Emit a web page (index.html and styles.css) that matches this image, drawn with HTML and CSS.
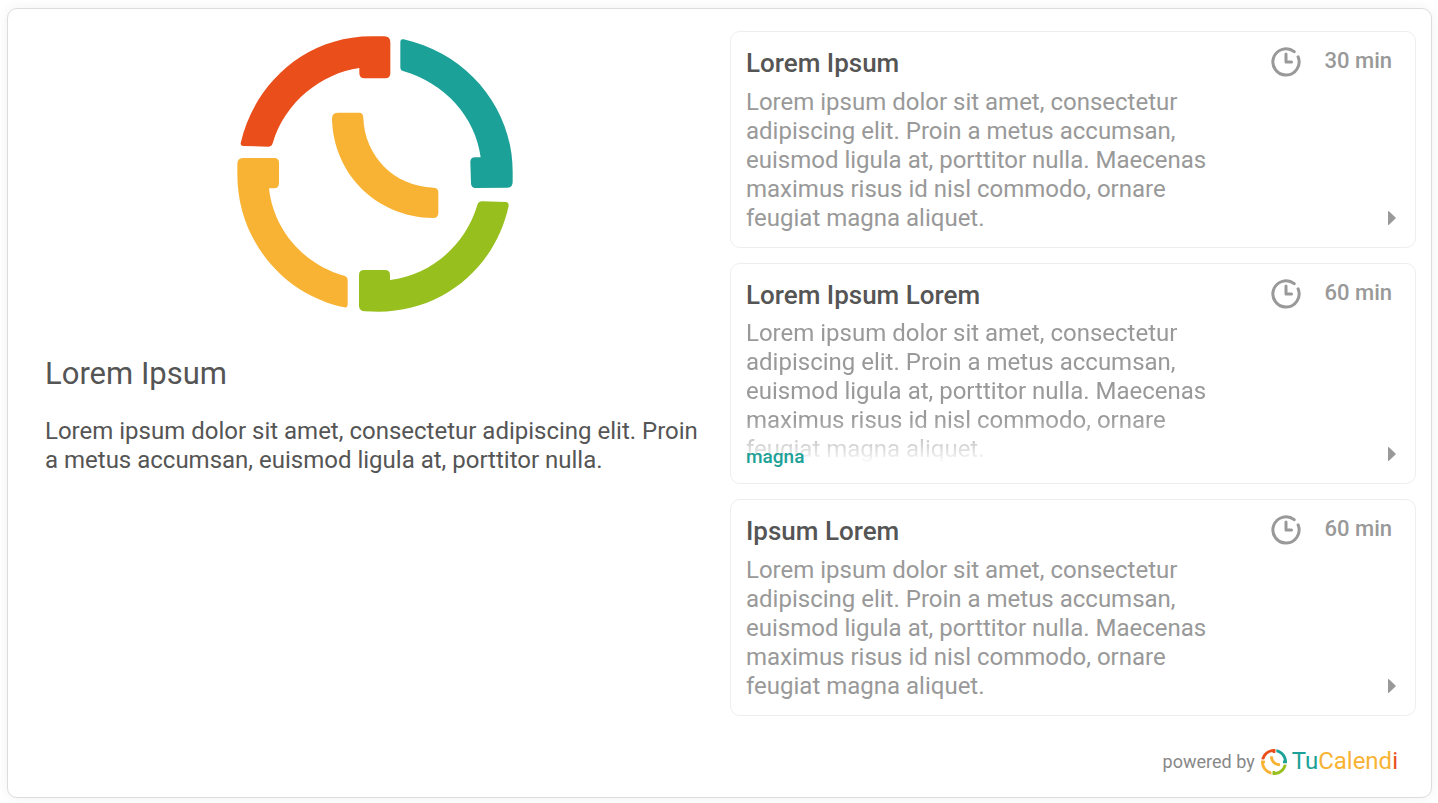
FILE: index.html
```
<!DOCTYPE html>
<html lang="en">
<head>
<meta charset="utf-8">
<meta name="viewport" content="width=device-width, initial-scale=1">
<title>TuCalendi</title>
<link rel="stylesheet" href="styles.css">
</head>
<body>
<svg class="defs" aria-hidden="true">
  <symbol id="logo" viewBox="36 33 828 828">
    <path fill="#ea4e1b" d="M47 355C84 184 236 34 440 34H478Q496 34 496 52V145Q496 160 481 160H418Q403 160 403 145V129C290 145 180 230 143 355Q140 365 131 365L54 363Q46 362 47 355Z"/>
    <path fill="#1ca198" d="M526 50Q526 41 536 43C728 86 863 250 863 440V470Q863 488 846 488L752 489Q738 489 738 475L736 411Q736 397 750 397H767C751 275 660 175 534 138Q526 136 526 128Z"/>
    <path fill="#97bf1e" d="M757 540Q760 529 771 529L844 531Q852 532 851 542C812 725 655 860 460 860L420 859Q402 858 402 842V750Q402 735 417 735H480Q495 735 495 750V765C620 750 721 660 757 540Z"/>
    <path fill="#f8b334" d="M37 417Q37 399 54 399H147Q162 399 162 413V474Q162 490 147 490H132C145 613 235 719 360 753Q368 756 368 764V838Q368 849 358 847C175 809 38 646 37 450Z"/>
    <path fill="#f8b334" d="M321 281Q321 263 337 263H402Q415 263 415 279C419 394 508 484 625 488Q640 488 640 502V564Q640 579 624 579C456 576 325 448 321 281Z"/>
  </symbol>
  <symbol id="clock" viewBox="0 0 30 30">
    <path fill="none" stroke="currentColor" stroke-width="3" stroke-linecap="round" d="M23.200 4.700A13.100 13.100 0 1 0 27.100 9.900"/>
    <path fill="none" stroke="currentColor" stroke-width="3" stroke-linecap="round" stroke-linejoin="round" d="M15 7V15H20.500"/>
  </symbol>
  <symbol id="arrow" viewBox="0 0 8 16">
    <path fill="currentColor" d="M0 1.500Q0 .5 1 1.200L7.500 7.500Q8 8 7.500 8.500L1 14.800Q0 15.500 0 14.500Z"/>
  </symbol>
</svg>

<main class="panel">
  <section class="profile">
    <svg class="profile-logo" role="img" aria-label="Logo"><use href="#logo"/></svg>
    <h1 class="profile-name">Lorem Ipsum</h1>
    <p class="profile-text">Lorem ipsum dolor sit amet, consectetur adipiscing elit. Proin a metus accumsan, euismod ligula at, porttitor nulla.</p>
  </section>

  <section class="events">
    <a class="card" href="#">
      <div class="card-main">
        <h2 class="card-title">Lorem Ipsum</h2>
        <p class="card-text">Lorem ipsum dolor sit amet, consectetur adipiscing elit. Proin a metus accumsan, euismod ligula at, porttitor nulla. Maecenas maximus risus id nisl commodo, ornare feugiat magna aliquet.</p>
      </div>
      <div class="card-side">
        <span class="duration"><svg class="clock"><use href="#clock"/></svg>30 min</span>
        <svg class="arrow"><use href="#arrow"/></svg>
      </div>
    </a>

    <a class="card card-tagged" href="#">
      <div class="card-main">
        <h2 class="card-title">Lorem Ipsum Lorem</h2>
        <p class="card-text card-text-faded">Lorem ipsum dolor sit amet, consectetur adipiscing elit. Proin a metus accumsan, euismod ligula at, porttitor nulla. Maecenas maximus risus id nisl commodo, ornare feugiat magna aliquet.</p>
        <span class="card-tag">magna</span>
      </div>
      <div class="card-side">
        <span class="duration"><svg class="clock"><use href="#clock"/></svg>60 min</span>
        <svg class="arrow"><use href="#arrow"/></svg>
      </div>
    </a>

    <a class="card" href="#">
      <div class="card-main">
        <h2 class="card-title">Ipsum Lorem</h2>
        <p class="card-text">Lorem ipsum dolor sit amet, consectetur adipiscing elit. Proin a metus accumsan, euismod ligula at, porttitor nulla. Maecenas maximus risus id nisl commodo, ornare feugiat magna aliquet.</p>
      </div>
      <div class="card-side">
        <span class="duration"><svg class="clock"><use href="#clock"/></svg>60 min</span>
        <svg class="arrow"><use href="#arrow"/></svg>
      </div>
    </a>

    <footer class="powered">
      <span>powered by</span>
      <a class="brand" href="#"><svg class="brand-logo"><use href="#logo"/></svg><span><span class="teal">Tu</span><span class="amber">Calend</span><span class="red">i</span></span></a>
    </footer>
  </section>
</main>
</body>
</html>
```
FILE: styles.css
```
* {
  box-sizing: border-box;
}

body {
  margin: 0;
  padding: 8px 6px 5px 7px;
  background: #fff;
  color: #555;
  font-family: Roboto, "Liberation Sans", sans-serif;
  font-size: 24px;
  line-height: 29px;
}

h1, h2, p {
  margin: 0;
}

a {
  color: inherit;
  text-decoration: none;
}

.defs {
  position: absolute;
  width: 0;
  height: 0;
}

.panel {
  display: grid;
  grid-template-columns: 660fr 686fr;
  gap: 25px;
  padding: 22px 15px 20px 37px;
  border: 1px solid #ddd;
  border-radius: 10px;
  background: #fff;
  box-shadow: 0 0 12px rgba(0, 0, 0, 0.06);
}

.profile {
  padding-top: 5px;
}

.profile-logo {
  display: block;
  width: 276px;
  height: 276px;
  margin: 0 auto 42px;
}

.profile-name {
  margin-bottom: 23px;
  font-size: 31px;
  font-weight: 400;
  line-height: 40px;
}

.events {
  display: flex;
  flex-direction: column;
  gap: 15px;
}

.card {
  display: flex;
  justify-content: space-between;
  padding: 15px 15px 14px;
  border: 1px solid #eee;
  border-radius: 10px;
  color: #999;
}

.card-main {
  position: relative;
  flex: 0 0 72%;
}

.card-title {
  margin-bottom: 9px;
  color: #555;
  font-size: 26px;
  font-weight: 500;
  line-height: 32px;
}

.card-tagged .card-title {
  margin-bottom: 8px;
}

.card-tagged .card-main {
  padding-bottom: 5px;
}

.card-text-faded {
  -webkit-mask-image: linear-gradient(#000 100px, transparent 145px);
  mask-image: linear-gradient(#000 100px, transparent 145px);
}

.card-tag {
  position: absolute;
  bottom: 0;
  left: 0;
  color: #1ca198;
  font-size: 19px;
  font-weight: 500;
  line-height: 24px;
}

.card-side {
  display: flex;
  flex-direction: column;
  justify-content: space-between;
  align-items: flex-end;
  padding-right: 4px;
}

.duration {
  display: flex;
  gap: 24px;
  padding-right: 4px;
  font-size: 22px;
  font-weight: 500;
  line-height: 27px;
}

.clock {
  width: 30px;
  height: 30px;
}

.arrow {
  width: 8px;
  height: 16px;
  margin-bottom: 7px;
}

.powered {
  display: flex;
  justify-content: flex-end;
  align-items: center;
  gap: 6px;
  padding: 16px 18px 1px 0;
  color: #888;
  font-size: 18px;
}

.brand {
  display: flex;
  align-items: center;
  gap: 5px;
  font-size: 24px;
}

.brand-logo {
  width: 26px;
  height: 26px;
}

.teal {
  color: #1ca198;
}

.amber {
  color: #f8b334;
}

.red {
  color: #ea4e1b;
}
```
